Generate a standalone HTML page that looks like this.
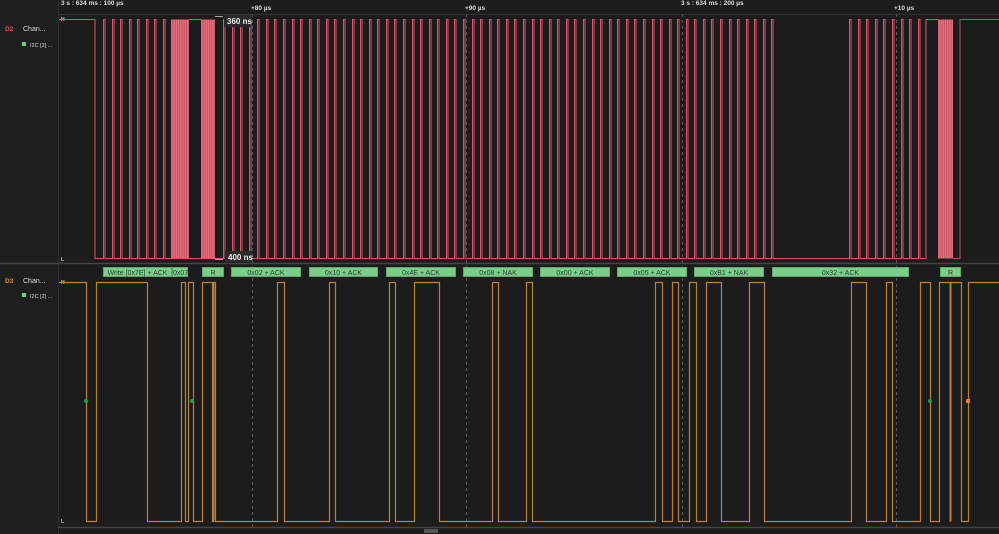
<!DOCTYPE html>
<html><head><meta charset="utf-8"><style>
html,body{margin:0;padding:0;background:#1c1c1c;width:999px;height:534px;overflow:hidden;font-family:"Liberation Sans",sans-serif}
svg{position:absolute;left:0;top:0}
</style></head><body>
<svg id="s" width="999" height="534" xmlns="http://www.w3.org/2000/svg">
<rect width="999" height="534" fill="#1c1c1c"/>
<rect x="0" y="0" width="58" height="534" fill="#1e1e1e"/>
<line x1="58.5" y1="0" x2="58.5" y2="534" stroke="#2e2e2e"/>
<line x1="58" y1="14.5" x2="999" y2="14.5" stroke="#333"/>
<line x1="0" y1="263.5" x2="999" y2="263.5" stroke="#444" stroke-width="1.5"/>
<line x1="58" y1="527.5" x2="999" y2="527.5" stroke="#444" stroke-width="1.5"/>
<rect x="424" y="529" width="14" height="4" fill="#555"/>
<g stroke="#555" stroke-dasharray="3,3">
<line x1="252.5" y1="14" x2="252.5" y2="527"/><line x1="466.5" y1="14" x2="466.5" y2="527"/>
<line x1="682.5" y1="14" x2="682.5" y2="527"/><line x1="896.5" y1="14" x2="896.5" y2="527"/>
</g>
<g font-size="6.5" font-weight="bold" fill="#ddd">
<text x="61" y="5">3 s : 634 ms : 100 µs</text>
<text x="251" y="10">+80 µs</text>
<text x="465" y="10">+90 µs</text>
<text x="681" y="5">3 s : 634 ms : 200 µs</text>
<text x="894" y="10">+10 µs</text>
</g>
<g font-size="7">
<text x="5" y="31" fill="#e0505a" font-weight="bold" font-size="6.5">D2</text>
<text x="23" y="31" fill="#ddd">Chan...</text>
<rect x="22" y="42" width="4" height="4" fill="#6fcf7f"/>
<text x="30" y="47" fill="#ddd" font-size="5.5">I2C [2] ...</text>
<text x="5" y="283" fill="#e08a30" font-weight="bold" font-size="6.5">D3</text>
<text x="23" y="283" fill="#ddd">Chan...</text>
<rect x="22" y="293" width="4" height="4" fill="#6fcf7f"/>
<text x="30" y="298" fill="#ddd" font-size="5.5">I2C [2] ...</text>
</g>
<g font-size="5" fill="#ccc" font-weight="bold">
<text x="61" y="21">H</text><text x="61" y="261">L</text>
<text x="61" y="284">H</text><text x="61" y="523">L</text>
</g>
<g id="d2"></g>
<g id="d3"></g>
<g id="lab"></g>
<g>
<line x1="215" y1="16.5" x2="223" y2="16.5" stroke="#aaa"/>
<rect x="224" y="15" width="27" height="12" fill="#2a2a2a"/>
<text x="227" y="24" font-size="8" fill="#eee" font-weight="bold">360 ns</text>
<line x1="215" y1="259.5" x2="223" y2="259.5" stroke="#aaa"/>
<rect x="225" y="251" width="27" height="11" fill="#2a2a2a"/>
<text x="228" y="260" font-size="8" fill="#eee" font-weight="bold">400 ns</text>
</g>
<circle cx="86" cy="401" r="2" fill="#1aa04a"/>
<circle cx="192" cy="401" r="2" fill="#1aa04a"/>
<circle cx="930" cy="401" r="2" fill="#1aa04a"/>
<rect x="966" y="399" width="4" height="4" fill="#f07a20"/>
</svg>
<script>
var NS="http://www.w3.org/2000/svg";
function el(p,t,a){var e=document.createElementNS(NS,t);for(var k in a)e.setAttribute(k,a[k]);p.appendChild(e);return e;}
// D2
var H=19.5,L=258.5,d2=document.getElementById("d2");
var xs=[];for(var x=103;x<=164;x+=8.55)xs.push(x);
for(var x=223;x<=773;x+=8.57)xs.push(x);
for(var x=849;x<=918;x+=8.6)xs.push(x);
var p="M59 "+H+" H95 V"+L;
xs.forEach(function(x){x=Math.round(x)+0.5;p+=" H"+x+" V"+H+" H"+(x+1.5)+" V"+L;});
el(d2,"path",{d:p+" H926 V"+H+" H938",fill:"none",stroke:"#d9566a","stroke-width":"1"});
el(d2,"path",{d:"M189 "+H+" H201",fill:"none",stroke:"#d9566a"});
el(d2,"path",{d:"M953 "+L+" H960 V"+H+" H999",fill:"none",stroke:"#c0505e"});
[[171,189],[201,215],[938,953]].forEach(function(r){
 el(d2,"rect",{x:r[0],y:H,width:r[1]-r[0],height:L-H,fill:"#c85a68"});
 for(var x=r[0]+1;x<r[1];x+=2.2)el(d2,"line",{x1:x,y1:H,x2:x,y2:L,stroke:"#ee7684","stroke-width":"0.8"});
});
el(d2,"line",{x1:171,y1:L,x2:189,y2:L,stroke:"#d9566a"});
// D3
var h=282.5,l=521.5;
var t=[86,96,147,181,185,188,193,202,212,213,215,277,284,329,335,389,395,414,439,492,498,526,532,655,662,672,678,689,696,706,721,749,764,851,866,886,892,920,930,939,961,968];
var q="M59 "+h,s=h;
t.forEach(function(x){x+=0.5;s=(s==h)?l:h;q+=" H"+x+" V"+s;});
q+=" H999";
var d3=document.getElementById("d3");
el(d3,"path",{d:q,fill:"none",stroke:"#b8823e","stroke-width":"1.2"});
el(d3,"line",{x1:950.5,y1:h,x2:950.5,y2:l,stroke:"#b8823e","stroke-width":"2"});
el(d3,"line",{x1:213.5,y1:h,x2:213.5,y2:l,stroke:"#b8823e","stroke-width":"2"});
// labels
var lb=[[103,172,"Write [0x7E] + ACK"],[172,188,"0x07"],[202,224,"R"],[231,301,"0x02 + ACK"],[309,378,"0x10 + ACK"],[386,456,"0x4E + ACK"],[463,533,"0x08 + NAK"],[540,610,"0x00 + ACK"],[617,687,"0x05 + ACK"],[694,764,"0xB1 + NAK"],[772,909,"0x32 + ACK"],[940,961,"R"]];
var g=document.getElementById("lab");
lb.forEach(function(b){
 el(g,"rect",{x:b[0]+0.5,y:267.5,width:b[1]-b[0]-1,height:9,fill:"#7dcd8a",stroke:"#5ba869","stroke-width":"1"});
 var tx=el(g,"text",{x:(b[2]=="0x07"?b[0]+1:(b[0]+b[1])/2),y:274.8,"font-size":"7",fill:"#2e3e32","text-anchor":(b[2]=="0x07"?"start":"middle"),"font-family":"Liberation Sans, sans-serif"});
 tx.textContent=b[2];
});
</script>
</body></html>
